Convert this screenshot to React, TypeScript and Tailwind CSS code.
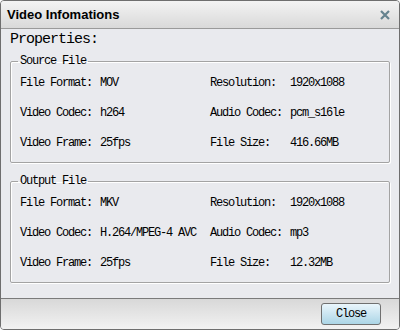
import React from "react";

const mono = { fontFamily: '"Liberation Mono", "DejaVu Sans Mono", monospace' };

type Row = [string, string, string, string];

function Section({ title, rows }: { title: string; rows: Row[] }) {
  return (
    <fieldset
      className="border border-[#a3a3a3] rounded-[2px] pl-[9px] pr-[9px] pt-[1px] pb-[4px] shadow-[1px_1px_0_#ffffff,inset_1px_1px_0_#ffffff]"
    >
      <legend className="h-[12px] leading-[12px] px-[2px] -ml-[2px] text-[12px] tracking-[-1.2px] text-black">
        {title}
      </legend>
      {rows.map((r, i) => (
        <div key={i} className="flex h-[30px] items-center text-[12px] tracking-[-1.2px] text-black leading-[12px]">
          <div className="w-[80px] whitespace-pre">{r[0]}</div>
          <div className="w-[110px] whitespace-pre">{r[1]}</div>
          <div className="w-[80px] whitespace-pre">{r[2]}</div>
          <div className="whitespace-pre">{r[3]}</div>
        </div>
      ))}
    </fieldset>
  );
}

export default function App() {
  return (
    <div
      className="w-[400px] h-[330px] flex flex-col border border-[#6e6e6e] rounded-[4px] overflow-hidden bg-[#e9eaee]"
      style={mono}
    >
      <div className="h-[27px] shrink-0 flex items-center justify-between pl-[6px] pr-[9px] bg-gradient-to-b from-[#f3f3f3] to-[#d9d9d9]">
        <span
          className="text-[13px] font-bold text-black"
          style={{ fontFamily: '"Liberation Sans", Arial, sans-serif' }}
        >
          Video Infomations
        </span>
        <svg width="10" height="10" viewBox="0 0 10 10">
          <path d="M1 1 L9 9 M9 1 L1 9" stroke="#65838f" strokeWidth="2.2" />
        </svg>
      </div>
      <div className="h-[1px] bg-[#9a9a9a] shrink-0" />
      <div className="flex-1 flex flex-col px-[9px]">
        <div className="h-[26px] pt-[2px] text-[15px] leading-[18px] tracking-[-1px] text-black">
          Properties:
        </div>
        <Section
          title="Source File"
          rows={[
            ["File Format:", "MOV", "Resolution:", "1920x1088"],
            ["Video Codec:", "h264", "Audio Codec:", "pcm_s16le"],
            ["Video Frame:", "25fps", "File Size:", "416.66MB"],
          ]}
        />
        <div className="h-[12px]" />
        <Section
          title="Output File"
          rows={[
            ["File Format:", "MKV", "Resolution:", "1920x1088"],
            ["Video Codec:", "H.264/MPEG-4 AVC", "Audio Codec:", "mp3"],
            ["Video Frame:", "25fps", "File Size:", "12.32MB"],
          ]}
        />
      </div>
      <div className="h-[1px] bg-[#7a7a7a] shrink-0" />
      <div className="h-[30px] shrink-0 flex items-center justify-end pr-[18px] bg-gradient-to-b from-[#d8d8d8] to-[#f2f2f2]">
        <button className="w-[60px] h-[22px] border border-[#707070] rounded-[3px] bg-gradient-to-b from-[#eaf6fc] to-[#abd5e6] text-[12px] tracking-[-1.2px] text-black leading-[12px]">
          Close
        </button>
      </div>
    </div>
  );
}
